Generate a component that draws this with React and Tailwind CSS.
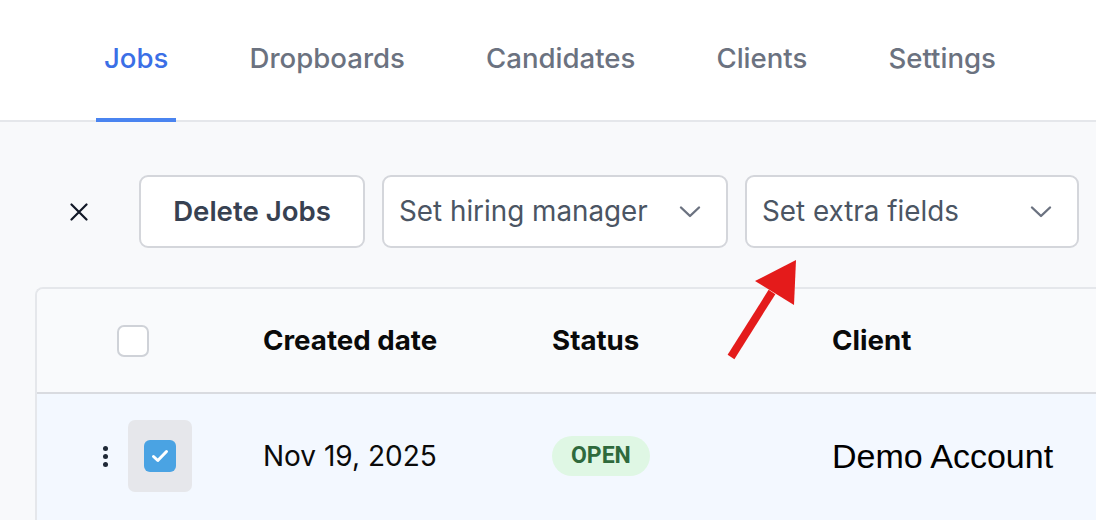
import React from "react";

const Chevron = () => (
  <svg width="22" height="14" viewBox="0 0 22 14" fill="none" className="shrink-0">
    <path d="M2 2.5 L11 11 L20 2.5" stroke="#6b7280" strokeWidth="2.4" strokeLinecap="round" strokeLinejoin="round" />
  </svg>
);

export default function App() {
  const tabs = ["Jobs", "Dropboards", "Candidates", "Clients", "Settings"];
  return (
    <div className="relative w-[1096px] h-[520px] overflow-hidden bg-[#f8f9fb]" style={{ fontFamily: "Inter, 'Noto Sans', sans-serif" }}>
      {/* Nav */}
      <div className="h-[122px] bg-white border-b-2 border-[#e5e7eb] flex items-stretch pl-[96px] gap-[65px]">
        {tabs.map((t, i) => (
          <div
            key={t}
            className={
              "flex items-center px-2 -mb-[2px] text-[27.6px] font-medium " +
              (i === 0 ? "border-b-4 border-[#4a84f0] text-[#3b6fe6]" : "border-b-4 border-transparent text-[#6b7280]")
            }
          >
            {t}
          </div>
        ))}
      </div>

      {/* Toolbar */}
      <div className="flex items-center pt-[53px] pl-[70px]">
        <svg width="18" height="18" viewBox="0 0 18 18" className="mr-[51px]">
          <path d="M1.5 1.5 L16.5 16.5 M16.5 1.5 L1.5 16.5" stroke="#111827" strokeWidth="2.2" strokeLinecap="round" />
        </svg>
        <div className="flex gap-[17px]">
          <button className="w-[226px] h-[73px] bg-white border-2 border-[#d4d6db] rounded-[9px] text-[27.6px] font-semibold text-[#374151] flex items-center justify-center">
            Delete Jobs
          </button>
          <div className="w-[346px] h-[73px] bg-white border-2 border-[#d4d6db] rounded-[9px] flex items-center justify-between pl-[15px] pr-[25px] text-[27.8px] text-[#4b5563]">
            <span>Set hiring manager</span>
            <Chevron />
          </div>
          <div className="w-[334px] h-[73px] bg-white border-2 border-[#d4d6db] rounded-[9px] flex items-center justify-between pl-[15px] pr-[25px] text-[27.8px] text-[#4b5563]">
            <span>Set extra fields</span>
            <Chevron />
          </div>
        </div>
      </div>

      {/* Table */}
      <div className="ml-[35px] mt-[39px] w-[1100px] border-l-2 border-t-2 border-[#e5e7eb] rounded-tl-[8px] overflow-hidden">
        <div className="h-[105px] bg-[#f9fafc] border-b-2 border-[#d9dbe0] grid grid-cols-[226px_289px_280px_1fr] items-center text-[27.7px] font-bold text-[#0a0a0a]">
          <div className="pl-[80px]">
            <div className="w-[32px] h-[32px] rounded-[7px] border-2 border-[#cfd2d8] bg-white" />
          </div>
          <div>Created date</div>
          <div>Status</div>
          <div>Client</div>
        </div>
        <div className="h-[130px] bg-[#f3f8ff] grid grid-cols-[226px_289px_280px_1fr] items-start pt-[26px] text-[#0a0a0a]">
          <div className="flex items-center pl-[64px] gap-[19px]">
            <div className="flex flex-col gap-[3px] w-[8px] items-center">
              <div className="w-[5px] h-[5px] rounded-full bg-[#1f2937]" />
              <div className="w-[5px] h-[5px] rounded-full bg-[#1f2937]" />
              <div className="w-[5px] h-[5px] rounded-full bg-[#1f2937]" />
            </div>
            <div className="w-[64px] h-[72px] rounded-[7px] bg-[#e6e7eb] flex items-center justify-center">
              <div className="w-[32px] h-[32px] rounded-[6px] bg-[#4aa3e3] flex items-center justify-center">
                <svg width="18" height="14" viewBox="0 0 18 14" fill="none">
                  <path d="M2.5 7.5 L6.8 11.5 L15.5 2.5" stroke="white" strokeWidth="3" strokeLinecap="round" strokeLinejoin="round" />
                </svg>
              </div>
            </div>
          </div>
          <div className="h-[72px] flex items-center text-[28px]">Nov 19, 2025</div>
          <div className="h-[72px] flex items-center">
            <span className="h-[40px] px-[19px] rounded-full bg-[#dff7e4] text-[#2f6a3c] font-bold text-[23px] flex items-center" style={{ fontFamily: "Roboto, sans-serif" }}>
              OPEN
            </span>
          </div>
          <div className="h-[72px] flex items-center text-[34px] text-black" style={{ fontFamily: "'Liberation Sans', Arial, sans-serif" }}>
            Demo Account
          </div>
        </div>
      </div>

      {/* Annotation arrow */}
      <svg className="absolute left-0 top-0 pointer-events-none" width="1096" height="520" viewBox="0 0 1096 520">
        <line x1="731" y1="357" x2="772" y2="292" stroke="#e41b1b" strokeWidth="8" />
        <polygon points="796,260 755,281 794,305" fill="#e41b1b" />
      </svg>
    </div>
  );
}
